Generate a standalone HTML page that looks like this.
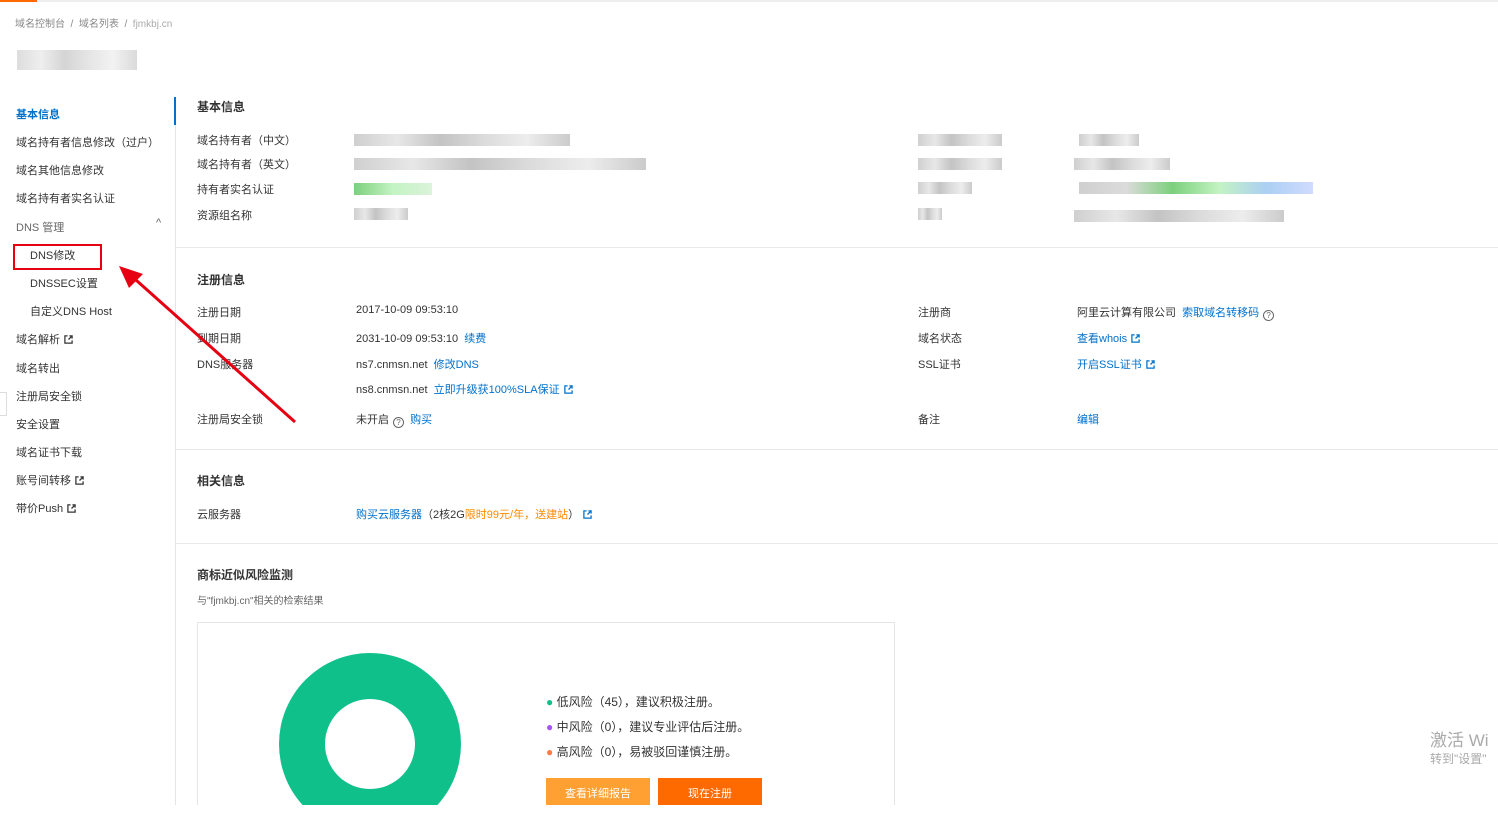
<!DOCTYPE html>
<html><head><meta charset="utf-8"><style>
*{margin:0;padding:0;box-sizing:border-box}
body{width:1498px;height:824px;background:#fff;font-family:"Liberation Sans","Noto Sans CJK SC",sans-serif;font-size:11px;color:#333;position:relative;overflow:hidden}
.a{position:absolute;white-space:nowrap;margin-top:-2px}
.l{color:#0070cc}
.g{color:#666}
.b{font-weight:bold;font-size:12px;color:#333}
.blur{position:absolute;height:12px;background:linear-gradient(90deg,#bbb,#ddd,#aaa,#ccc,#e5e5e5,#b5b5b5);opacity:.7}
.ext{display:inline-block;width:9px;height:9px;vertical-align:-1px;margin-left:4px}
.hr{position:absolute;left:176px;right:0;height:1px;background:#e8e8e8}
.q{display:inline-block;width:11px;height:11px;border:1px solid #666;border-radius:50%;font-size:8px;text-align:center;line-height:9px;color:#666;vertical-align:-2px;margin-left:4px}
</style></head><body>
<div class="a" style="left:0;top:2px;width:37px;height:2px;background:#ff6a00"></div>
<div class="a" style="left:37px;top:2px;width:1461px;height:2px;background:#eee"></div>
<div class="a g" style="left:15px;top:17px;font-size:10px;color:#888">域名控制台 &nbsp;/&nbsp; 域名列表 &nbsp;/&nbsp; <span style="color:#aaa">fjmkbj.cn</span></div>
<div class="blur" style="left:17px;top:50px;width:120px;height:20px;opacity:.5"></div>

<div class="a" style="left:174px;top:99px;width:2px;height:28px;background:#0070cc"></div>
<div class="a" style="left:175px;top:127px;width:1px;height:680px;background:#e5e5e5"></div>
<div class="a l" style="left:16px;top:108px;font-weight:bold">基本信息</div>
<div class="a" style="left:16px;top:136px">域名持有者信息修改（过户）</div>
<div class="a" style="left:16px;top:164px">域名其他信息修改</div>
<div class="a" style="left:16px;top:192px">域名持有者实名认证</div>
<div class="a g" style="left:16px;top:221px">DNS 管理</div>
<div class="a g" style="left:156px;top:219px">^</div>
<div class="a" style="left:13px;top:246px;width:89px;height:26px;border:2px solid #e60012"></div>
<div class="a" style="left:30px;top:249px">DNS修改</div>
<div class="a" style="left:30px;top:277px">DNSSEC设置</div>
<div class="a" style="left:30px;top:305px">自定义DNS Host</div>
<div class="a" style="left:16px;top:333px">域名解析<svg class="ext" viewBox="0 0 10 10"><path d="M4 1H1v8h8V6M6 1h3v3M9 1L5 5" stroke="#333" stroke-width="1.4" fill="none"/></svg></div>
<div class="a" style="left:16px;top:362px">域名转出</div>
<div class="a" style="left:16px;top:390px">注册局安全锁</div>
<div class="a" style="left:16px;top:418px">安全设置</div>
<div class="a" style="left:16px;top:446px">域名证书下载</div>
<div class="a" style="left:16px;top:474px">账号间转移<svg class="ext" viewBox="0 0 10 10"><path d="M4 1H1v8h8V6M6 1h3v3M9 1L5 5" stroke="#333" stroke-width="1.4" fill="none"/></svg></div>
<div class="a" style="left:16px;top:502px">带价Push<svg class="ext" viewBox="0 0 10 10"><path d="M4 1H1v8h8V6M6 1h3v3M9 1L5 5" stroke="#333" stroke-width="1.4" fill="none"/></svg></div>
<div class="a" style="left:0;top:394px;width:7px;height:24px;border:1px solid #ddd;border-left:0;background:#fff"></div>

<div class="a b" style="left:197px;top:100px">基本信息</div>
<div class="a" style="left:197px;top:134px">域名持有者（中文）</div>
<div class="a" style="left:197px;top:158px">域名持有者（英文）</div>
<div class="a" style="left:197px;top:183px">持有者实名认证</div>
<div class="a" style="left:197px;top:209px">资源组名称</div>
<div class="blur" style="left:354px;top:134px;width:216px"></div>
<div class="blur" style="left:354px;top:158px;width:292px"></div>
<div class="blur" style="left:354px;top:183px;width:78px;background:linear-gradient(90deg,#4b4,#aea,#cec)"></div>
<div class="blur" style="left:354px;top:208px;width:54px"></div>
<div class="blur" style="left:918px;top:134px;width:84px"></div>
<div class="blur" style="left:918px;top:158px;width:84px"></div>
<div class="blur" style="left:918px;top:182px;width:54px"></div>
<div class="blur" style="left:918px;top:208px;width:24px"></div>
<div class="blur" style="left:1079px;top:134px;width:60px"></div>
<div class="blur" style="left:1074px;top:158px;width:96px"></div>
<div class="blur" style="left:1079px;top:182px;width:234px;background:linear-gradient(90deg,#bbb,#ccc,#4b4,#aea,#8be,#bcf)"></div>
<div class="blur" style="left:1074px;top:210px;width:210px"></div>
<div class="hr" style="top:247px"></div>

<div class="a b" style="left:197px;top:273px">注册信息</div>
<div class="a" style="left:197px;top:306px">注册日期</div>
<div class="a" style="left:197px;top:332px">到期日期</div>
<div class="a" style="left:197px;top:358px">DNS服务器</div>
<div class="a" style="left:197px;top:413px">注册局安全锁</div>
<div class="a" style="left:356px;top:306px">2017-10-09 09:53:10</div>
<div class="a" style="left:356px;top:332px">2031-10-09 09:53:10 &nbsp;<span class="l">续费</span></div>
<div class="a" style="left:356px;top:358px">ns7.cnmsn.net &nbsp;<span class="l">修改DNS</span></div>
<div class="a" style="left:356px;top:383px">ns8.cnmsn.net &nbsp;<span class="l">立即升级获100%SLA保证<svg class="ext" viewBox="0 0 10 10"><path d="M4 1H1v8h8V6M6 1h3v3M9 1L5 5" stroke="#0070cc" stroke-width="1.4" fill="none"/></svg></span></div>
<div class="a" style="left:356px;top:413px">未开启<span class="q">?</span> &nbsp;<span class="l">购买</span></div>
<div class="a" style="left:918px;top:306px">注册商</div>
<div class="a" style="left:918px;top:332px">域名状态</div>
<div class="a" style="left:918px;top:358px">SSL证书</div>
<div class="a" style="left:918px;top:413px">备注</div>
<div class="a" style="left:1077px;top:306px">阿里云计算有限公司 &nbsp;<span class="l">索取域名转移码</span><span class="q">?</span></div>
<div class="a l" style="left:1077px;top:332px">查看whois<svg class="ext" viewBox="0 0 10 10"><path d="M4 1H1v8h8V6M6 1h3v3M9 1L5 5" stroke="#0070cc" stroke-width="1.4" fill="none"/></svg></div>
<div class="a l" style="left:1077px;top:358px">开启SSL证书<svg class="ext" viewBox="0 0 10 10"><path d="M4 1H1v8h8V6M6 1h3v3M9 1L5 5" stroke="#0070cc" stroke-width="1.4" fill="none"/></svg></div>
<div class="a l" style="left:1077px;top:413px">编辑</div>
<div class="hr" style="top:449px"></div>

<div class="a b" style="left:197px;top:474px">相关信息</div>
<div class="a" style="left:197px;top:508px">云服务器</div>
<div class="a" style="left:356px;top:508px"><span class="l">购买云服务器</span>（2核2G<span style="color:#ff8a00">限时99元/年，送建站</span>）<svg class="ext" viewBox="0 0 10 10"><path d="M4 1H1v8h8V6M6 1h3v3M9 1L5 5" stroke="#0070cc" stroke-width="1.4" fill="none"/></svg></div>
<div class="hr" style="top:543px"></div>

<div class="a b" style="left:197px;top:568px">商标近似风险监测</div>
<div class="a g" style="left:197px;top:594px;font-size:10px">与"fjmkbj.cn"相关的检索结果</div>
<div class="a" style="left:197px;top:624px;width:698px;height:190px;border:1px solid #e5e5e5;overflow:hidden">
 <div class="a" style="left:81px;top:32px;width:182px;height:182px;border-radius:50%;background:#10c08b"></div>
 <div class="a" style="left:127px;top:78px;width:90px;height:90px;border-radius:50%;background:#fff"></div>
 <div class="a" style="left:348px;top:72px;font-size:12px"><span style="color:#10c08b">●</span> 低风险（45），建议积极注册。</div>
 <div class="a" style="left:348px;top:97px;font-size:12px"><span style="color:#a855f7">●</span> 中风险（0），建议专业评估后注册。</div>
 <div class="a" style="left:348px;top:122px;font-size:12px"><span style="color:#ff7a45">●</span> 高风险（0），易被驳回谨慎注册。</div>
 <div class="a" style="left:348px;top:157px;width:104px;height:30px;background:#ffa033;color:#fff;text-align:center;line-height:32px">查看详细报告</div>
 <div class="a" style="left:460px;top:157px;width:104px;height:30px;background:#ff6a00;color:#fff;text-align:center;line-height:32px">现在注册</div>
</div>
<div class="a" style="left:0;top:807px;width:1498px;height:19px;background:#fff"></div>

<svg class="a" style="left:115px;top:264px" width="185" height="165"><line x1="180" y1="160" x2="12" y2="10" stroke="#e60012" stroke-width="3"/><polygon points="4,4 28,12 14,26" fill="#e60012"/></svg>
<div class="a" style="left:1430px;top:728px;font-size:17px;color:#aaa">激活 Wi</div>
<div class="a" style="left:1430px;top:752px;font-size:12px;color:#aaa">转到"设置"</div>
</body></html>
